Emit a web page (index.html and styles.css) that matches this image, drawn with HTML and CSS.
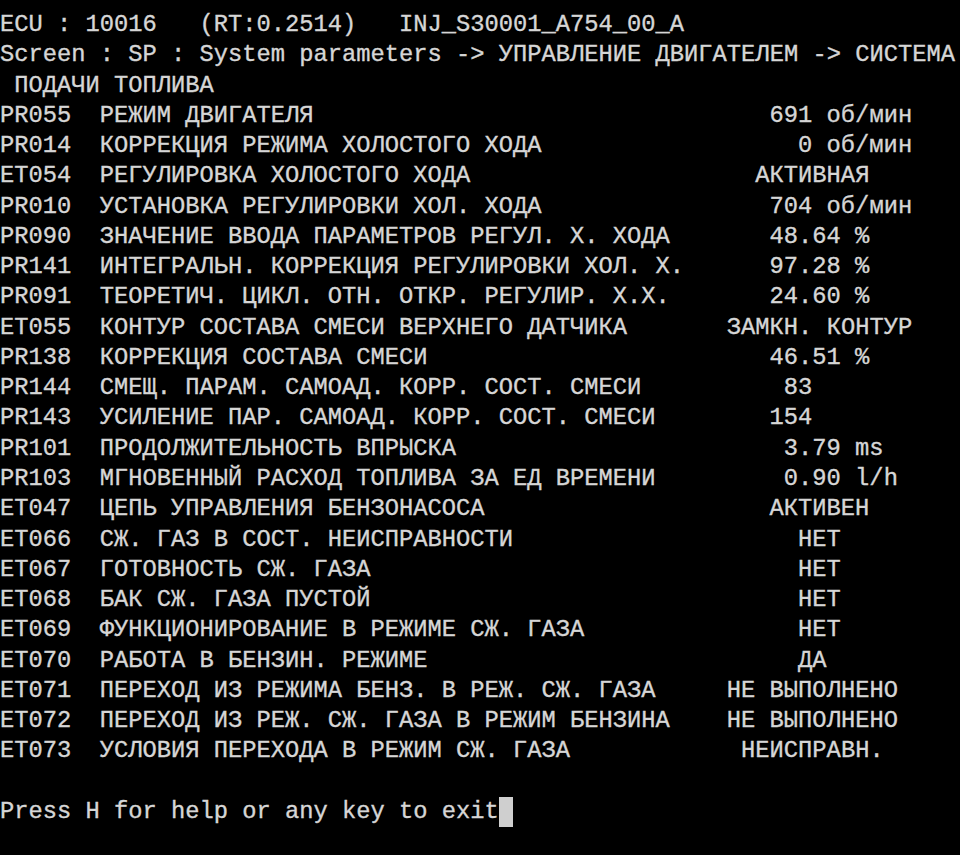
FILE: index.html
```html
<!DOCTYPE html>
<html lang="ru">
<head>
<meta charset="utf-8">
<title>Terminal</title>
<link rel="stylesheet" href="styles.css">
</head>
<body>
<div class="term">
  <div class="line">ECU : 10016   (RT:0.2514)   INJ_S30001_A754_00_A</div>
  <div class="line">Screen : SP : System parameters -&gt; УПРАВЛЕНИЕ ДВИГАТЕЛЕМ -&gt; СИСТЕМА</div>
  <div class="line"> ПОДАЧИ ТОПЛИВА</div>

  <div class="row"><span class="code">PR055</span><span class="desc">РЕЖИМ ДВИГАТЕЛЯ</span><span class="val o3">691 об/мин</span></div>
  <div class="row"><span class="code">PR014</span><span class="desc">КОРРЕКЦИЯ РЕЖИМА ХОЛОСТОГО ХОДА</span><span class="val o5">0 об/мин</span></div>
  <div class="row"><span class="code">ET054</span><span class="desc">РЕГУЛИРОВКА ХОЛОСТОГО ХОДА</span><span class="val o2">АКТИВНАЯ</span></div>
  <div class="row"><span class="code">PR010</span><span class="desc">УСТАНОВКА РЕГУЛИРОВКИ ХОЛ. ХОДА</span><span class="val o3">704 об/мин</span></div>
  <div class="row"><span class="code">PR090</span><span class="desc">ЗНАЧЕНИЕ ВВОДА ПАРАМЕТРОВ РЕГУЛ. Х. ХОДА</span><span class="val o3">48.64 %</span></div>
  <div class="row"><span class="code">PR141</span><span class="desc">ИНТЕГРАЛЬН. КОРРЕКЦИЯ РЕГУЛИРОВКИ ХОЛ. Х.</span><span class="val o3">97.28 %</span></div>
  <div class="row"><span class="code">PR091</span><span class="desc">ТЕОРЕТИЧ. ЦИКЛ. ОТН. ОТКР. РЕГУЛИР. Х.Х.</span><span class="val o3">24.60 %</span></div>
  <div class="row"><span class="code">ET055</span><span class="desc">КОНТУР СОСТАВА СМЕСИ ВЕРХНЕГО ДАТЧИКА</span><span class="val o0">ЗАМКН. КОНТУР</span></div>
  <div class="row"><span class="code">PR138</span><span class="desc">КОРРЕКЦИЯ СОСТАВА СМЕСИ</span><span class="val o3">46.51 %</span></div>
  <div class="row"><span class="code">PR144</span><span class="desc">СМЕЩ. ПАРАМ. САМОАД. КОРР. СОСТ. СМЕСИ</span><span class="val o4">83</span></div>
  <div class="row"><span class="code">PR143</span><span class="desc">УСИЛЕНИЕ ПАР. САМОАД. КОРР. СОСТ. СМЕСИ</span><span class="val o3">154</span></div>
  <div class="row"><span class="code">PR101</span><span class="desc">ПРОДОЛЖИТЕЛЬНОСТЬ ВПРЫСКА</span><span class="val o4">3.79 ms</span></div>
  <div class="row"><span class="code">PR103</span><span class="desc">МГНОВЕННЫЙ РАСХОД ТОПЛИВА ЗА ЕД ВРЕМЕНИ</span><span class="val o4">0.90 l/h</span></div>
  <div class="row"><span class="code">ET047</span><span class="desc">ЦЕПЬ УПРАВЛЕНИЯ БЕНЗОНАСОСА</span><span class="val o3">АКТИВЕН</span></div>
  <div class="row"><span class="code">ET066</span><span class="desc">СЖ. ГАЗ В СОСТ. НЕИСПРАВНОСТИ</span><span class="val o5">НЕТ</span></div>
  <div class="row"><span class="code">ET067</span><span class="desc">ГОТОВНОСТЬ СЖ. ГАЗА</span><span class="val o5">НЕТ</span></div>
  <div class="row"><span class="code">ET068</span><span class="desc">БАК СЖ. ГАЗА ПУСТОЙ</span><span class="val o5">НЕТ</span></div>
  <div class="row"><span class="code">ET069</span><span class="desc">ФУНКЦИОНИРОВАНИЕ В РЕЖИМЕ СЖ. ГАЗА</span><span class="val o5">НЕТ</span></div>
  <div class="row"><span class="code">ET070</span><span class="desc">РАБОТА В БЕНЗИН. РЕЖИМЕ</span><span class="val o5">ДА</span></div>
  <div class="row"><span class="code">ET071</span><span class="desc">ПЕРЕХОД ИЗ РЕЖИМА БЕНЗ. В РЕЖ. СЖ. ГАЗА</span><span class="val o0">НЕ ВЫПОЛНЕНО</span></div>
  <div class="row"><span class="code">ET072</span><span class="desc">ПЕРЕХОД ИЗ РЕЖ. СЖ. ГАЗА В РЕЖИМ БЕНЗИНА</span><span class="val o0">НЕ ВЫПОЛНЕНО</span></div>
  <div class="row"><span class="code">ET073</span><span class="desc">УСЛОВИЯ ПЕРЕХОДА В РЕЖИМ СЖ. ГАЗА</span><span class="val o1">НЕИСПРАВН.</span></div>

  <div class="line blank"></div>
  <div class="line">Press H for help or any key to exit<span class="cursor"></span></div>
</div>
</body>
</html>
```

FILE: styles.css
```css
html, body {
  margin: 0;
  padding: 0;
  background: #000;
}

body {
  width: 960px;
  height: 855px;
  overflow: hidden;
}

.term {
  padding-top: 10px;
  color: #d6d6d6;
  -webkit-text-stroke: 0.35px #d6d6d6;
  font-family: "Liberation Mono", "DejaVu Sans Mono", monospace;
  font-size: 23.75px;
  line-height: 30.27px;
}

.line {
  white-space: pre;
  height: 30.27px;
}

.row {
  display: grid;
  grid-template-columns: 7ch 44ch auto;
  white-space: pre;
  height: 30.27px;
}

.val.o0 { padding-left: 0; }
.val.o1 { padding-left: 1ch; }
.val.o2 { padding-left: 2ch; }
.val.o3 { padding-left: 3ch; }
.val.o4 { padding-left: 4ch; }
.val.o5 { padding-left: 5ch; }

.cursor {
  display: inline-block;
  width: 1ch;
  height: 30px;
  vertical-align: top;
  background: #cfcfcf;
}
```
